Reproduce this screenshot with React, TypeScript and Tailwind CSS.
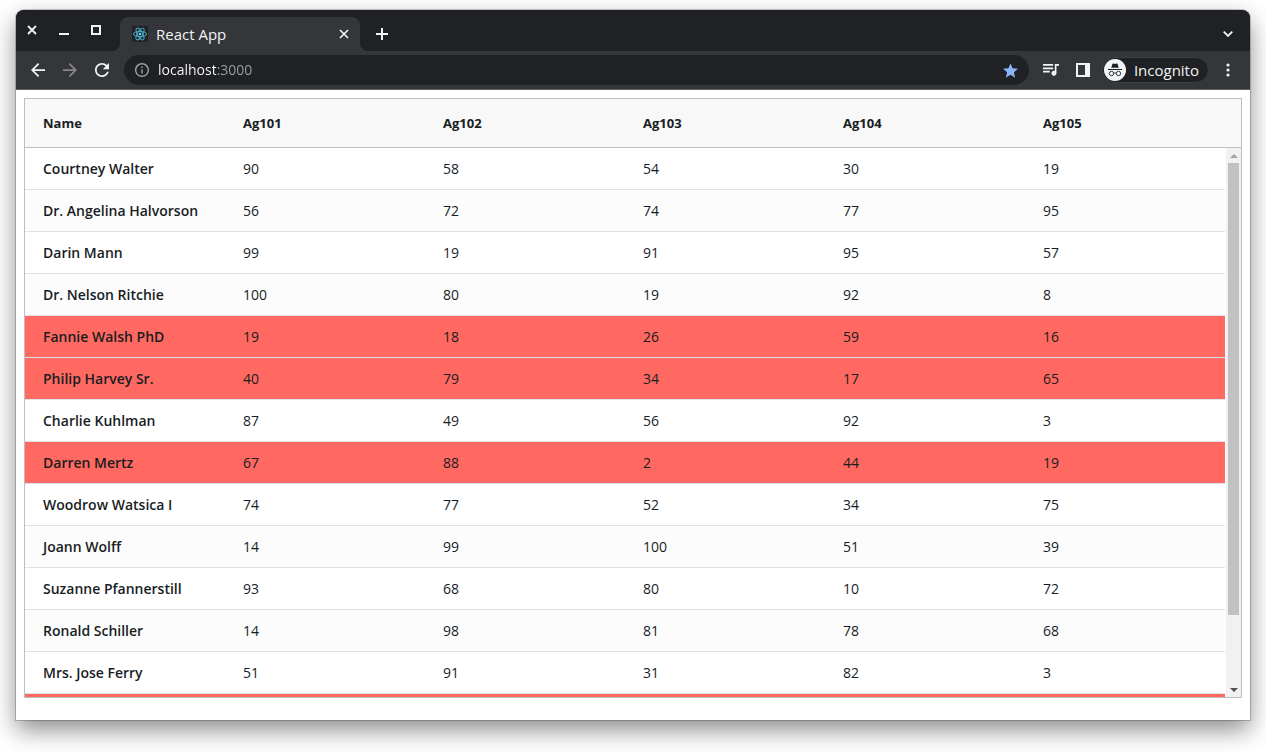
import { ReactNode } from "react";

type StudentRow = {
  name: string;
  marks: number[];
  failed?: boolean;
};

const columns = ["Name", "Ag101", "Ag102", "Ag103", "Ag104", "Ag105"];

const rows: StudentRow[] = [
  { name: "Courtney Walter", marks: [90, 58, 54, 30, 19] },
  { name: "Dr. Angelina Halvorson", marks: [56, 72, 74, 77, 95] },
  { name: "Darin Mann", marks: [99, 19, 91, 95, 57] },
  { name: "Dr. Nelson Ritchie", marks: [100, 80, 19, 92, 8] },
  { name: "Fannie Walsh PhD", marks: [19, 18, 26, 59, 16], failed: true },
  { name: "Philip Harvey Sr.", marks: [40, 79, 34, 17, 65], failed: true },
  { name: "Charlie Kuhlman", marks: [87, 49, 56, 92, 3] },
  { name: "Darren Mertz", marks: [67, 88, 2, 44, 19], failed: true },
  { name: "Woodrow Watsica I", marks: [74, 77, 52, 34, 75] },
  { name: "Joann Wolff", marks: [14, 99, 100, 51, 39] },
  { name: "Suzanne Pfannerstill", marks: [93, 68, 80, 10, 72] },
  { name: "Ronald Schiller", marks: [14, 98, 81, 78, 68] },
  { name: "Mrs. Jose Ferry", marks: [51, 91, 31, 82, 3] },
  { name: "", marks: [], failed: true },
];

const IconButton = ({
  label,
  className = "",
  children,
}: {
  label: string;
  className?: string;
  children: ReactNode;
}) => (
  <button
    aria-label={label}
    className={`flex size-8 shrink-0 items-center justify-center ${className}`}
  >
    {children}
  </button>
);

const ReactLogo = () => (
  <svg viewBox="0 0 16 16" className="size-4 shrink-0">
    <rect width="16" height="16" rx="1" fill="#20232a" />
    <circle cx="8" cy="8" r="1.3" fill="#61dafb" />
    <g fill="none" stroke="#4fb3cf" strokeWidth="0.9">
      <ellipse cx="8" cy="8" rx="6.6" ry="2.6" />
      <ellipse cx="8" cy="8" rx="6.6" ry="2.6" transform="rotate(60 8 8)" />
      <ellipse cx="8" cy="8" rx="6.6" ry="2.6" transform="rotate(120 8 8)" />
    </g>
  </svg>
);

const TabStrip = () => (
  <div className="flex h-[41px] items-stretch">
    <div className="flex items-start rounded-br-lg bg-[#202124] pt-1 pr-2">
      <IconButton label="Close window">
        <svg viewBox="0 0 10 10" className="size-[10px]">
          <path d="M1 1l8 8M9 1l-8 8" stroke="currentColor" strokeWidth="1.8" />
        </svg>
      </IconButton>
      <IconButton label="Minimise window">
        <svg viewBox="0 0 10 10" className="size-[10px]">
          <path d="M0 9h10" stroke="currentColor" strokeWidth="2" />
        </svg>
      </IconButton>
      <IconButton label="Maximise window">
        <svg viewBox="0 0 10 10" className="size-[10px]">
          <path
            d="M1 1h8v8h-8z"
            fill="none"
            stroke="currentColor"
            strokeWidth="2"
          />
        </svg>
      </IconButton>
    </div>

    <div className="flex w-60 bg-[linear-gradient(#202124_50%,#35363a_50%)] pt-[7px]">
      <div className="flex flex-1 items-center rounded-t-lg bg-[#35363a] pl-3">
        <ReactLogo />
        <span className="ml-2 flex-1 text-[15px]">React App</span>
        <IconButton label="Close tab">
          <svg viewBox="0 0 10 10" className="size-[10px]">
            <path
              d="M1 1l8 8M9 1l-8 8"
              stroke="currentColor"
              strokeWidth="1.7"
            />
          </svg>
        </IconButton>
      </div>
    </div>

    <div className="flex flex-1 items-center justify-between rounded-bl-lg bg-[#202124] px-[6px] pt-[7px]">
      <IconButton label="New tab">
        <svg viewBox="0 0 12 12" className="size-3">
          <path d="M6 0v12M0 6h12" stroke="currentColor" strokeWidth="2" />
        </svg>
      </IconButton>
      <IconButton label="Search tabs">
        <svg viewBox="0 0 10 6" className="h-[6px] w-[10px]">
          <path
            d="M.7.7L5 5 9.3.7"
            fill="none"
            stroke="currentColor"
            strokeWidth="1.8"
          />
        </svg>
      </IconButton>
    </div>
  </div>
);

const Toolbar = () => (
  <div className="flex h-[39px] items-center border-b border-[#5b5c60] px-[6px]">
    <IconButton label="Back">
      <svg viewBox="4 4 16 16" className="size-[14px]" fill="currentColor">
        <path d="M20 11H7.83l5.59-5.59L12 4l-8 8 8 8 1.41-1.41L7.83 13H20v-2z" />
      </svg>
    </IconButton>
    <IconButton label="Forward" className="text-[#86878a]">
      <svg viewBox="4 4 16 16" className="size-[14px]" fill="currentColor">
        <path d="M4 13h12.17l-5.59 5.59L12 20l8-8-8-8-1.41 1.41L16.17 11H4v2z" />
      </svg>
    </IconButton>
    <IconButton label="Reload">
      <svg viewBox="4 4 16 16" className="size-[14px]" fill="currentColor">
        <path d="M17.65 6.35C16.2 4.9 14.21 4 12 4c-4.42 0-7.99 3.58-7.99 8s3.57 8 7.99 8c3.73 0 6.84-2.55 7.73-6h-2.08c-.82 2.33-3.04 4-5.65 4-3.31 0-6-2.69-6-6s2.69-6 6-6c1.66 0 3.14.69 4.22 1.78L13 11h7V4l-2.35 2.35z" />
      </svg>
    </IconButton>

    <div className="ml-[6px] flex h-[30px] flex-1 items-center rounded-full bg-[#202124] pl-[11px] pr-[2px]">
      <svg
        viewBox="2 2 20 20"
        className="size-[14px] shrink-0 text-[#9aa0a6]"
        fill="currentColor"
      >
        <path d="M11 7h2v2h-2zM11 11h2v6h-2zM12 2C6.48 2 2 6.48 2 12s4.48 10 10 10 10-4.48 10-10S17.52 2 12 2zm0 18c-4.41 0-8-3.59-8-8s3.59-8 8-8 8 3.59 8 8-3.59 8-8 8z" />
      </svg>
      <input
        aria-label="Address"
        defaultValue="localhost:3000"
        className="ml-[9px] min-w-0 flex-1 bg-[linear-gradient(90deg,#ffffff_58px,#9aa0a6_58px)] bg-clip-text text-sm text-transparent outline-none"
      />
      <IconButton label="Bookmark" className="text-[#8ab4f8]">
        <svg viewBox="2 2 20 19" className="size-[15px]" fill="currentColor">
          <path d="M12 17.27L18.18 21l-1.64-7.03L22 9.24l-7.19-.61L12 2 9.19 8.63 2 9.24l5.46 4.73L5.82 21z" />
        </svg>
      </IconButton>
    </div>

    <IconButton label="Media controls" className="ml-[6px]">
      <svg viewBox="3 6 19 14" className="h-3 w-4" fill="currentColor">
        <path d="M15 6H3v2h12V6zm0 4H3v2h12v-2zM3 16h8v-2H3v2zM17 6v8.18c-.31-.11-.65-.18-1-.18-1.66 0-3 1.34-3 3s1.34 3 3 3 3-1.34 3-3V8h3V6h-5z" />
      </svg>
    </IconButton>
    <IconButton label="Side panel">
      <svg viewBox="0 0 14 14" className="size-[14px]" fill="currentColor">
        <path fillRule="evenodd" d="M0 0h14v14H0zM2 2v10h7V2z" />
      </svg>
    </IconButton>
    <button className="ml-[3px] flex h-[26px] items-center rounded-full border border-[#3d3e42] bg-[#202124] pl-[1px] pr-[9px] text-[15px]">
      <svg viewBox="0 0 22 22" className="mr-2 size-[22px]">
        <circle cx="11" cy="11" r="11" fill="#f1f3f4" />
        <path
          d="M7.3 8.8l1-3.6c.2-.6.7-.8 1.3-.6l1.4.4 1.4-.4c.6-.2 1.1 0 1.3.6l1 3.6z"
          fill="#202124"
        />
        <path d="M4 10h14v1H4z" fill="#202124" />
        <g fill="none" stroke="#202124" strokeWidth="0.9">
          <circle cx="7.5" cy="14.5" r="2.2" />
          <circle cx="14.5" cy="14.5" r="2.2" />
          <path d="M9.7 14.3c.8-.5 1.8-.5 2.6 0" />
        </g>
      </svg>
      Incognito
    </button>
    <IconButton label="Menu" className="ml-[3px]">
      <svg viewBox="0 0 4 14" className="h-[14px] w-1" fill="currentColor">
        <circle cx="2" cy="2" r="1.6" />
        <circle cx="2" cy="7" r="1.6" />
        <circle cx="2" cy="12" r="1.6" />
      </svg>
    </IconButton>
  </div>
);

const Scrollbar = () => (
  <div className="ml-px flex min-h-0 flex-col items-center bg-[#f1f1f1]">
    <div className="flex h-[15px] items-center">
      <svg viewBox="0 0 8 4" className="h-1 w-2" fill="#a3a3a3">
        <path d="M0 4l4-4 4 4z" />
      </svg>
    </div>
    <div className="flex-1">
      <div className="h-[87%] w-[11px] bg-[#c1c1c1]" />
    </div>
    <div className="flex h-[15px] items-center">
      <svg viewBox="0 0 8 4" className="h-1 w-2" fill="#505050">
        <path d="M0 0l4 4 4-4z" />
      </svg>
    </div>
  </div>
);

const MarksGrid = () => (
  <div className="grid min-h-0 flex-1 grid-cols-[1fr_16px] grid-rows-[49px_1fr] border border-[#babfc7] text-left text-[#181d1f]">
    <table className="contents">
      <thead className="col-span-2 block border-b border-[#babfc7] bg-[#f8f8f8] pr-4">
        <tr className="grid h-full grid-cols-6 items-center pt-px">
          {columns.map((column) => (
            <th key={column} className="pl-[18px] text-[13px] font-bold">
              {column}
            </th>
          ))}
        </tr>
      </thead>
      <tbody className="block min-h-0 overflow-y-auto [scrollbar-width:none]">
        {rows.map((row, index) => (
          <tr
            key={index}
            className={`grid h-[42px] grid-cols-6 items-center border-b border-[#dde2eb] ${
              row.failed
                ? "bg-[#ff6961]"
                : index % 2 === 0
                  ? "bg-white"
                  : "bg-[#fcfcfc]"
            }`}
          >
            <td className="pl-[18px] text-sm font-semibold whitespace-nowrap">
              {row.name}
            </td>
            {row.marks.map((mark, i) => (
              <td key={i} className="pl-[18px] text-sm">
                {mark}
              </td>
            ))}
          </tr>
        ))}
      </tbody>
    </table>
    <Scrollbar />
  </div>
);

export default function App() {
  return (
    <div className="flex h-screen flex-col bg-white px-4 pt-[10px] pb-8 font-['Open_Sans','Noto_Sans',sans-serif]">
      <div className="flex min-h-0 flex-1 flex-col overflow-hidden rounded-t-lg bg-white shadow-[0_0_0_1px_rgba(0,0,0,0.2),0_10px_24px_rgba(0,0,0,0.45)]">
        <header className="bg-[#35363a] text-[#f1f3f4]">
          <TabStrip />
          <Toolbar />
        </header>
        <main className="flex min-h-0 flex-1 flex-col px-2 pt-2 pb-[22px]">
          <MarksGrid />
        </main>
      </div>
    </div>
  );
}
